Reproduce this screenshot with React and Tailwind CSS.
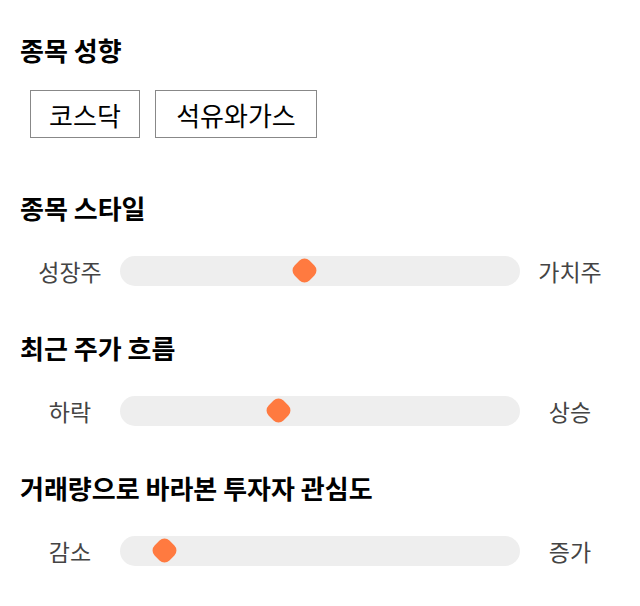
const sliders = [
  { title: '종목 스타일', left: '성장주', right: '가치주', pos: 184 },
  { title: '최근 주가 흐름', left: '하락', right: '상승', pos: 158 },
  { title: '거래량으로 바라본 투자자 관심도', left: '감소', right: '증가', pos: 44 },
];

function Slider({ left, right, pos }) {
  return (
    <div className="flex items-center h-[30px]">
      <div className="w-[100px] text-center text-[23px] leading-[30px] text-[#444]">{left}</div>
      <div className="relative w-[400px] h-[30px] bg-[#eeeeee] rounded-full">
        <div
          className="absolute top-[4px] w-[21px] h-[21px] -ml-[10px] rotate-45 rounded-[7px] bg-[#ff7a40]"
          style={{ left: pos }}
        />
      </div>
      <div className="w-[100px] text-center text-[23px] leading-[30px] text-[#444]">{right}</div>
    </div>
  );
}

export default function App() {
  return (
    <div
      className="w-[640px] h-[606px] bg-white px-5 pt-[34px]"
      style={{ fontFamily: '"Noto Sans CJK KR", "Noto Sans", sans-serif' }}
    >
      <h2 className="text-[26px] font-bold text-black leading-[32px]">종목 성향</h2>
      <div className="flex gap-[15px] mt-[24px] ml-[10px]">
        <div className="w-[110px] h-[48px] border border-[#888] flex items-center justify-center text-[26px] text-black">
          코스닥
        </div>
        <div className="w-[162px] h-[48px] border border-[#888] flex items-center justify-center text-[26px] text-black">
          석유와가스
        </div>
      </div>
      {sliders.map((s, i) => (
        <div key={s.title} className={i === 0 ? 'mt-[54px]' : 'mt-[46px]'}>
          <h2 className="text-[26px] font-bold text-black leading-[32px]">{s.title}</h2>
          <div className="mt-[32px]">
            <Slider left={s.left} right={s.right} pos={s.pos} />
          </div>
        </div>
      ))}
    </div>
  );
}
